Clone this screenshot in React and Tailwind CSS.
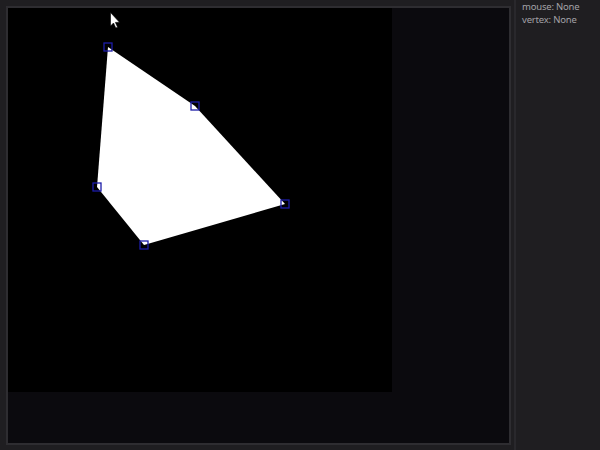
export default function App() {
  const pts = [
    [108, 47],
    [195, 106],
    [285, 204],
    [144, 245],
    [97, 187],
  ];
  return (
    <div className="w-[600px] h-[450px] bg-[#1f1e21] flex overflow-hidden" style={{ fontFamily: '"Noto Sans", sans-serif' }}>
      <div className="pl-[6px] pt-[6px]">
        <div className="w-[505px] h-[439px] border-2 border-[#2e2d31] bg-[#0b0a0e] flex flex-col">
          <div className="w-[384px] h-[384px] bg-black relative">
            <svg width="384" height="384" viewBox="8 8 384 384" className="block">
              <polygon points={pts.map((p) => p.join(",")).join(" ")} fill="#ffffff" />
              {pts.map((p, i) => (
                <rect key={i} x={p[0] - 4} y={p[1] - 4} width="8" height="8" fill="none" stroke="#1c1ca8" strokeWidth="1.3" />
              ))}
              <path d="M110.5 12.5 L110.5 26 L113.5 23 L115.8 28 L117.6 27.2 L115.4 22.4 L119.5 22.3 Z" fill="#ffffff" stroke="#000" strokeWidth="0.6" />
            </svg>
          </div>
        </div>
      </div>
      <div className="ml-[3px] w-[2px] h-full bg-[#29282c]" />
      <div className="pl-[6px] pt-0 text-[9.5px] leading-[13px] tracking-[-0.2px] text-[#a3a2a7]">
        <div>mouse: None</div>
        <div>vertex: None</div>
      </div>
    </div>
  );
}
